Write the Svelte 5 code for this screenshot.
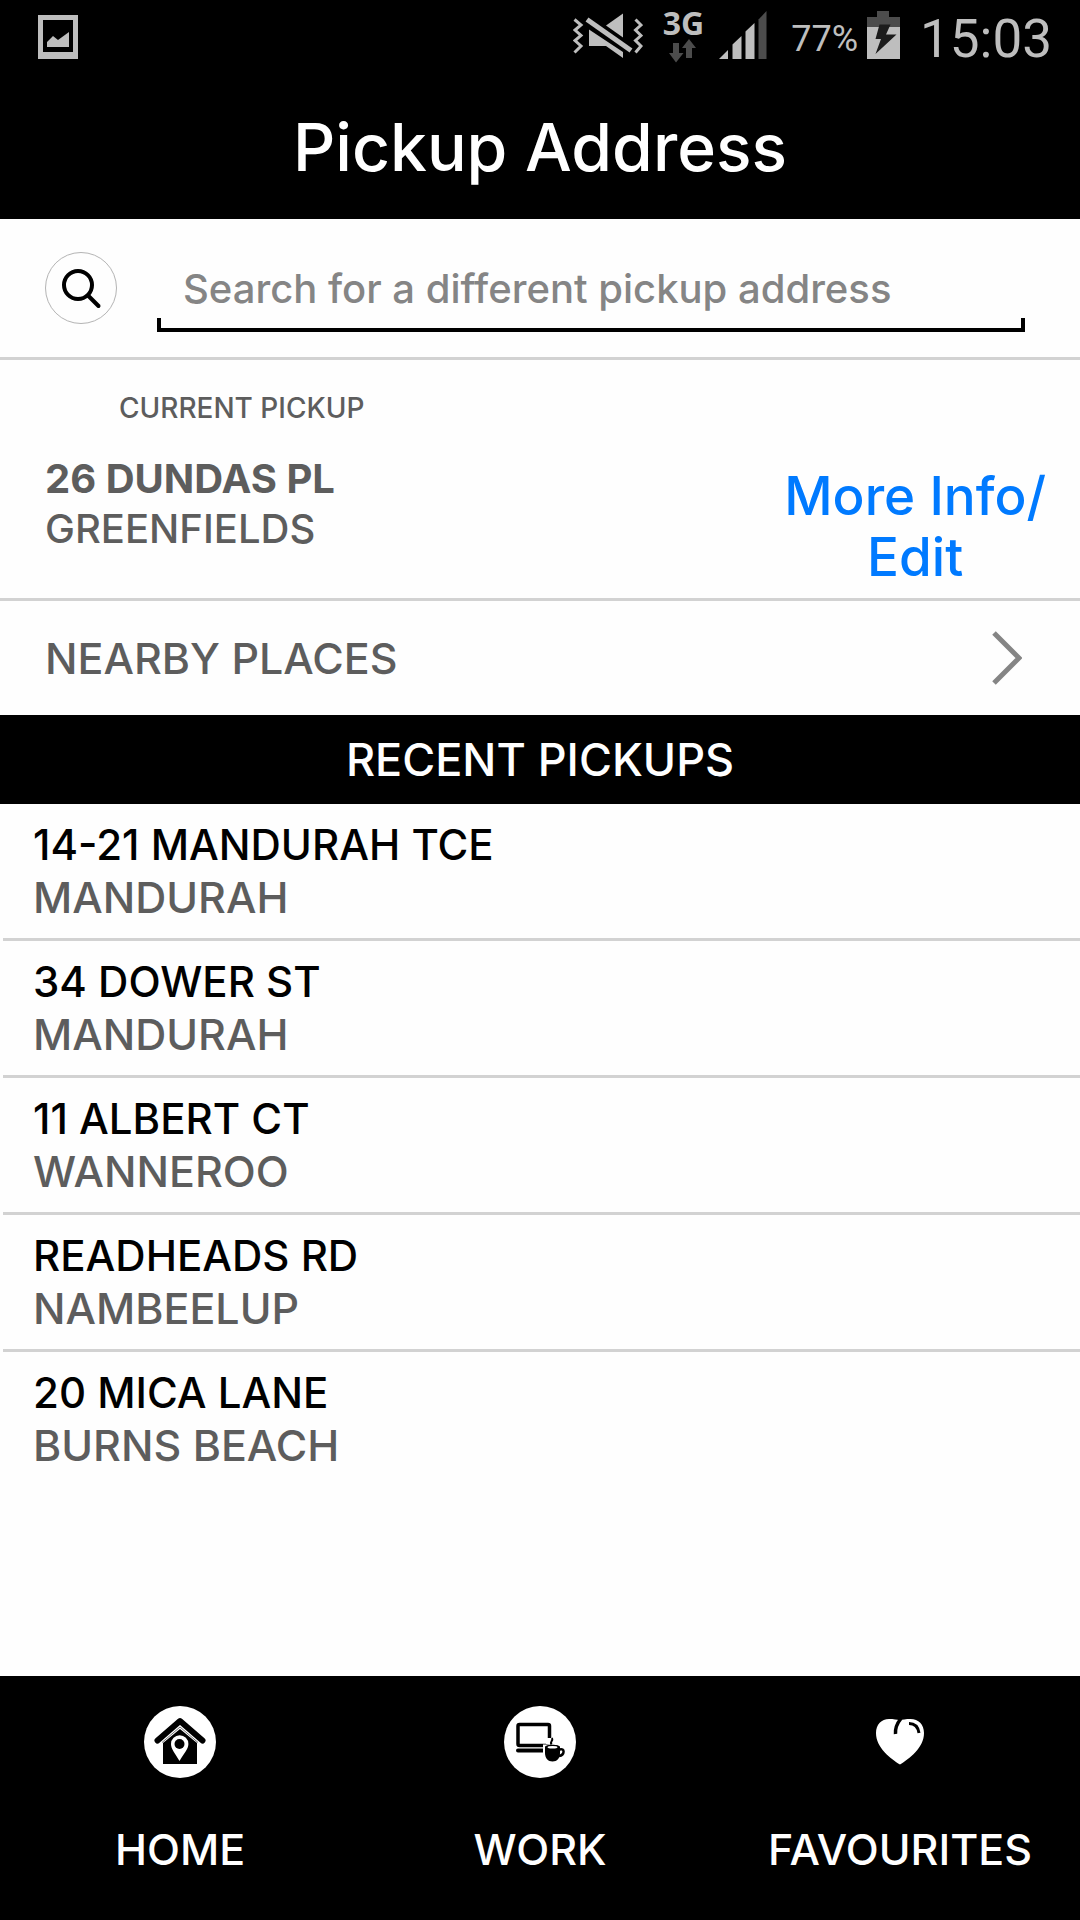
<script>
  let query = $state('');

  const current = { street: '26 DUNDAS PL', suburb: 'GREENFIELDS' };

  const recent = [
    { street: '14-21 MANDURAH TCE', suburb: 'MANDURAH' },
    { street: '34 DOWER ST', suburb: 'MANDURAH' },
    { street: '11 ALBERT CT', suburb: 'WANNEROO' },
    { street: 'READHEADS RD', suburb: 'NAMBEELUP' },
    { street: '20 MICA LANE', suburb: 'BURNS BEACH' },
  ];
</script>

<div class="screen">
  <header>
    <div class="status">
      <svg class="photo" width="40" height="44" viewBox="0 0 40 44" aria-hidden="true">
        <path fill-rule="evenodd" d="M0 0h40v44H0zM5 5v32h30V5z" />
        <path d="M9 32v-5l6-6 5 4 11-8v15z" />
      </svg>

      <svg width="70" height="48" viewBox="0 11 70 48" aria-hidden="true">
        <path d="M33 25.500l17-12v24z" />
        <path d="M16 29.500l34 22.500v6L33 46H16z" />
        <path class="line thick" d="M14 19.500L58 50.500" />
        <path class="line" d="M1.500 19.500L8 25l-6 5 6 5.500-6 5 6 5.500-6.500 6.500" />
        <path class="line" d="M62.500 19.500L68 25l-5.500 5 5.500 5.500-5.500 5 5.500 5.500-5.500 6.500" />
      </svg>

      <div class="network">
        <span>3G</span>
        <svg width="28" height="24" viewBox="0 0 28 24" aria-hidden="true">
          <path class="dim" d="M4 4h6v10h4.500L7 23.500 0 14h4z" />
          <path class="dim" d="M20 0l7 9h-4v10h-6V9h-4z" />
        </svg>
      </div>

      <svg class="signal" width="48" height="48" viewBox="0 0 48 48" aria-hidden="true">
        <path d="M0 48l9-9v9z" />
        <path d="M13.500 48V33.500l9-8.500v23z" />
        <path d="M26.500 48V20.500l9-8.500v36z" />
        <path class="dim" d="M39.500 48V8.500l8-8.500v48z" />
      </svg>

      <span class="percent">77%</span>

      <svg class="battery" width="33" height="48" viewBox="0 0 33 48" aria-hidden="true">
        <path class="dim" d="M10 0h12v6h11v10H0V6h10z" />
        <path d="M0 16h33v32H0z" />
        <path class="bolt" d="M12.500 13.500h11L19 23.500h10.500L8.500 43l5.500-15H8.500z" />
      </svg>

      <time>15:03</time>
    </div>

    <h1>Pickup Address</h1>
  </header>

  <main>
    <form class="search" onsubmit={(event) => event.preventDefault()}>
      <button type="submit" class="search-btn" aria-label="Search">
        <svg width="70" height="70" viewBox="0 0 70 70" aria-hidden="true">
          <circle cx="32" cy="32" r="14" />
          <path d="M42 42.500l10.500 10.500" />
        </svg>
      </button>
      <div class="field">
        <input
          type="text"
          aria-label="Pickup address"
          placeholder="Search for a different pickup address"
          bind:value={query}
        />
      </div>
    </form>

    <section class="current">
      <div class="address">
        <h2>CURRENT PICKUP</h2>
        <strong>{current.street}</strong>
        <span>{current.suburb}</span>
      </div>
      <a href="#edit">More Info/<br />Edit</a>
    </section>

    <button type="button" class="nearby">
      NEARBY PLACES
      <svg width="30" height="54" viewBox="0 0 30 54" aria-hidden="true">
        <path d="M2 2l25 25L2 52" />
      </svg>
    </button>

    <h2 class="bar">RECENT PICKUPS</h2>

    <ul>
      {#each recent as place}
        <li>
          <button type="button" class="place">
            <span class="street">{place.street}</span>
            <span class="suburb">{place.suburb}</span>
          </button>
        </li>
      {/each}
    </ul>
  </main>

  <nav>
    <button type="button">
      <svg width="72" height="72" viewBox="0 0 72 72" aria-hidden="true">
        <circle cx="36" cy="36" r="36" fill="#fff" />
        <path d="M19 37l17-14 17 14v21H19z" fill="#000" />
        <path d="M13.500 34.500L36 15l22.500 19.500" fill="none" stroke="#000" stroke-width="6" stroke-linecap="round" stroke-linejoin="round" />
        <path d="M18 36.500L36 21l18 15.500" fill="none" stroke="#777" stroke-width="1" />
        <path d="M35.500 55C31 47 27 43 27 38a8.700 8.700 0 0 1 17.400 0c0 5-4.400 9-8.900 17z" fill="#fff" />
        <circle cx="35.500" cy="38" r="5" fill="#000" />
      </svg>
      HOME
    </button>
    <button type="button">
      <svg width="72" height="72" viewBox="0 0 72 72" aria-hidden="true">
        <circle cx="36" cy="36" r="36" fill="#fff" />
        <rect x="14" y="18.500" width="31.500" height="21" rx="1.500" fill="none" stroke="#000" stroke-width="3.500" />
        <path d="M14 44.500h28" stroke="#000" stroke-width="4" stroke-linecap="round" />
        <path d="M42 38v-6h7v7z" fill="#fff" />
        <path d="M39 38.500h19v12H39z" fill="#fff" />
        <path d="M41 41c0-3 15-3 15 0v6c0 5-3 8.500-7.500 8.500S41 52 41 47z" fill="#000" />
        <ellipse cx="48.500" cy="41.300" rx="5" ry="1.200" fill="#fff" />
        <path d="M55.500 43.500c5.500-2 5.500 5.500-.500 6.500" fill="none" stroke="#000" stroke-width="2.500" />
        <path d="M47.500 38.500c-2-3.500 2-3 .500-6.500" fill="none" stroke="#000" stroke-width="2" />
      </svg>
      WORK
    </button>
    <button type="button">
      <svg width="72" height="72" viewBox="0 0 72 72" aria-hidden="true">
        <path d="M36 58.500C27 53 12 42 12 27c0-8.500 5.500-14 13-14 4.500 0 8 .500 10.500 1.500C38 13.500 42 13 46.500 13 54.500 13 60 18.500 60 27c0 15-15 26-24 31.500z" fill="#fff" />
        <path d="M31.500 28c-.500-6 1-10 5.500-15.500" fill="none" stroke="#000" stroke-width="3.500" />
        <path d="M45 17.500c5.500 0 9 3 10 9.500" fill="none" stroke="#000" stroke-width="3" />
      </svg>
      FAVOURITES
    </button>
  </nav>
</div>

<style>
  :global(body) {
    margin: 0;
  }

  .screen {
    display: flex;
    min-height: 100vh;
    flex-direction: column;
    background: #fefefe;
    color: #5d5d5d;
    font-family: Inter, sans-serif;
    font-size: 43px;
    font-weight: 500;
  }

  button {
    margin: 0;
    padding: 0;
    border: 0;
    background: none;
    color: inherit;
    font: inherit;
    cursor: pointer;
  }

  header {
    background: #000;
    color: #fff;
  }

  .status {
    display: flex;
    box-sizing: border-box;
    height: 75px;
    align-items: flex-start;
    padding: 11px 28px 0 38px;
    color: #bebebe;
    font-family: Roboto, sans-serif;
    font-weight: 400;
  }

  .status svg {
    flex: none;
    fill: #bebebe;
  }

  .status .photo {
    margin: 4px auto 0 0;
  }

  .status .dim {
    fill: #4c4c4c;
  }

  .status .bolt {
    fill: #1c1c1c;
  }

  .status .line {
    fill: none;
    stroke: #bebebe;
    stroke-width: 3;
  }

  .status .thick {
    stroke-width: 5;
  }

  .network {
    display: flex;
    flex-direction: column;
    align-items: center;
    margin: 0 15px 0 20px;
    font-family: 'Open Sans', sans-serif;
    font-size: 32px;
    font-weight: 700;
    line-height: 24px;
  }

  .network svg {
    margin-top: 4px;
  }

  .percent {
    margin: 0 9px 0 24px;
    font-size: 36px;
    line-height: 56px;
  }

  time {
    margin-left: 20px;
    font-size: 53px;
    line-height: 56px;
  }

  h1 {
    margin: 0;
    font-size: 66px;
    font-weight: 500;
    line-height: 144px;
    text-align: center;
  }

  main {
    flex: 1;
  }

  .search {
    display: flex;
    align-items: center;
    gap: 40px;
    padding: 25px 55px 25px 45px;
    border-bottom: 3px solid #d2d2d2;
  }

  .search-btn {
    display: flex;
    flex: none;
    border: 1px solid #b4b4b4;
    border-radius: 50%;
  }

  .search-btn svg {
    fill: none;
    stroke: #000;
    stroke-width: 4;
    stroke-linecap: round;
  }

  .field {
    position: relative;
    min-width: 0;
    flex: 1;
  }

  /* Open-topped bracket under the text */
  .field::after {
    position: absolute;
    right: 0;
    bottom: 0;
    left: 0;
    height: 10px;
    border: 4px solid #000;
    border-top: 0;
    content: '';
    pointer-events: none;
  }

  input {
    display: block;
    box-sizing: border-box;
    width: 100%;
    height: 88px;
    padding: 0 26px;
    border: 0;
    outline: 0;
    background: none;
    color: #5d5d5d;
    font: inherit;
    font-size: 40px;
  }

  input::placeholder {
    color: #858585;
    opacity: 1;
  }

  .current {
    display: flex;
    align-items: flex-end;
    justify-content: space-between;
    padding: 30px 34px 10px 45px;
    border-bottom: 3px solid #d2d2d2;
  }

  .address {
    display: flex;
    flex-direction: column;
    padding-bottom: 34px;
    font-size: 40px;
    line-height: 50px;
  }

  .address h2 {
    margin: 0 0 28px 74px;
    font-size: 28px;
    font-weight: 500;
    line-height: 36px;
  }

  .current a {
    color: #007aff;
    font-size: 53px;
    line-height: 61px;
    text-align: center;
    text-decoration: none;
  }

  .nearby {
    display: flex;
    width: 100%;
    height: 114px;
    align-items: center;
    justify-content: space-between;
    padding: 0 58px 0 45px;
  }

  .nearby svg {
    fill: none;
    stroke: #858585;
    stroke-width: 5;
  }

  .bar {
    margin: 0;
    background: #000;
    color: #fff;
    font-size: 45px;
    font-weight: 500;
    line-height: 89px;
    text-align: center;
  }

  ul {
    margin: 0;
    padding: 0 0 0 3px;
    list-style: none;
  }

  li + li {
    border-top: 3px solid #d2d2d2;
  }

  .place {
    display: flex;
    width: 100%;
    flex-direction: column;
    padding: 15px 30px;
    line-height: 52px;
    text-align: left;
  }

  .street {
    color: #000;
    font-size: 42px;
  }

  nav {
    display: grid;
    grid-template-columns: repeat(3, 1fr);
    background: #000;
    color: #fff;
  }

  nav button {
    display: flex;
    flex-direction: column;
    align-items: center;
    gap: 46px;
    padding: 30px 0 46px;
    line-height: 50px;
  }
</style>
